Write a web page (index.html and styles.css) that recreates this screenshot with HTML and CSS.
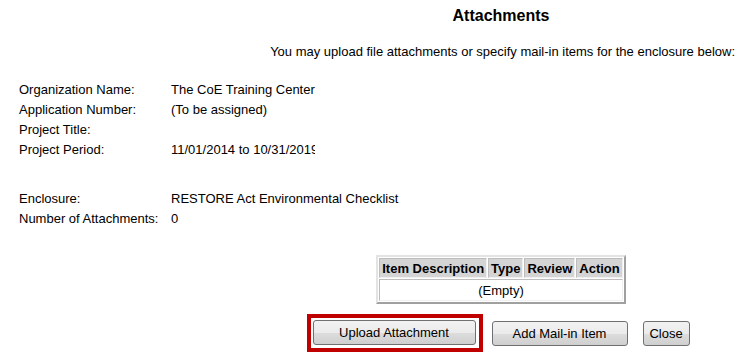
FILE: index.html
```html
<!DOCTYPE html>
<html lang="en">
<head>
  <meta charset="UTF-8" />
  <title>Attachments</title>
  <link rel="stylesheet" href="styles.css">
</head>
<body>

  <div class="center-col">
    <h2 class="title">Attachments</h2>
  </div>

  <p class="intro">You may upload file attachments or specify mail-in items for the enclosure below:</p>

  <div class="info">
    <span class="label">Organization Name:</span><span>The CoE Training Center</span>
    <span class="label">Application Number:</span><span>(To be assigned)</span>
    <span class="label">Project Title:</span><span></span>
    <span class="label">Project Period:</span><span class="clip">11/01/2014 to 10/31/2019</span>
  </div>

  <div class="info enclosure">
    <span class="label">Enclosure:</span><span>RESTORE Act Environmental Checklist</span>
    <span class="label">Number of Attachments:</span><span>0</span>
  </div>

  <div class="center-col">
    <table class="items">
      <tr>
        <th>Item Description</th>
        <th>Type</th>
        <th>Review</th>
        <th>Action</th>
      </tr>
      <tr>
        <td colspan="4">(Empty)</td>
      </tr>
    </table>

    <div class="actions">
      <div class="highlight">
        <button class="btn btn-upload">Upload Attachment</button>
      </div>
      <button class="btn btn-mail">Add Mail-in Item</button>
      <button class="btn btn-close">Close</button>
    </div>
  </div>

</body>
</html>
```

FILE: styles.css
```css
body {
  font-family: "Liberation Sans", Arial, sans-serif;
  font-size: 13px;
  color: #000;
  background: #fff;
  margin: 0;
}
.center-col {
  margin-left: 248px;
  width: 506px;
  display: flex;
  flex-direction: column;
  align-items: center;
}
.title {
  font-size: 16px;
  font-weight: bold;
  margin: 6px 0 0;
  line-height: 19px;
}
.intro {
  text-align: right;
  margin: 19px 19px 0 0;
  line-height: 16px;
}
.info {
  display: grid;
  grid-template-columns: 152px auto;
  grid-auto-rows: 20px;
  align-items: center;
  margin: 19px 0 0 19px;
}
.enclosure {
  margin-top: 29px;
}
.clip {
  display: block;
  width: 144px;
  overflow: hidden;
  white-space: nowrap;
}
.items {
  margin-top: 27px;
  border-collapse: separate;
  border-spacing: 1px;
  border: 2px solid;
  border-color: #e3e3e3 #a0a0a0 #a0a0a0 #e3e3e3;
  background: #fff;
}
.items th {
  background: #d4d4d4;
  font-weight: bold;
  padding: 0 2px;
  height: 18px;
  border: 1px solid;
  border-color: #bdbdbd #f0f0f0 #f0f0f0 #bdbdbd;
  white-space: nowrap;
}
.items td {
  text-align: center;
  height: 18px;
  border: 1px solid;
  border-color: #bdbdbd #f0f0f0 #f0f0f0 #bdbdbd;
}
.actions {
  display: flex;
  align-items: center;
  margin-top: 10px;
  margin-left: -6px;
}
.highlight {
  border: 4px solid #c00000;
  padding: 2px 3px 3px 2px;
  display: flex;
}
.btn {
  font-family: "Liberation Sans", Arial, sans-serif;
  font-size: 13px;
  color: #000;
  height: 25px;
  border: 1px solid #707070;
  border-radius: 3px;
  background: linear-gradient(#f2f2f2 0%, #ebebeb 50%, #dddddd 51%, #cfcfcf 100%);
  padding: 0;
}
.btn-upload {
  width: 163px;
}
.btn-mail {
  width: 136px;
  margin-left: 9px;
}
.btn-close {
  width: 47px;
  margin-left: 15px;
}
```
